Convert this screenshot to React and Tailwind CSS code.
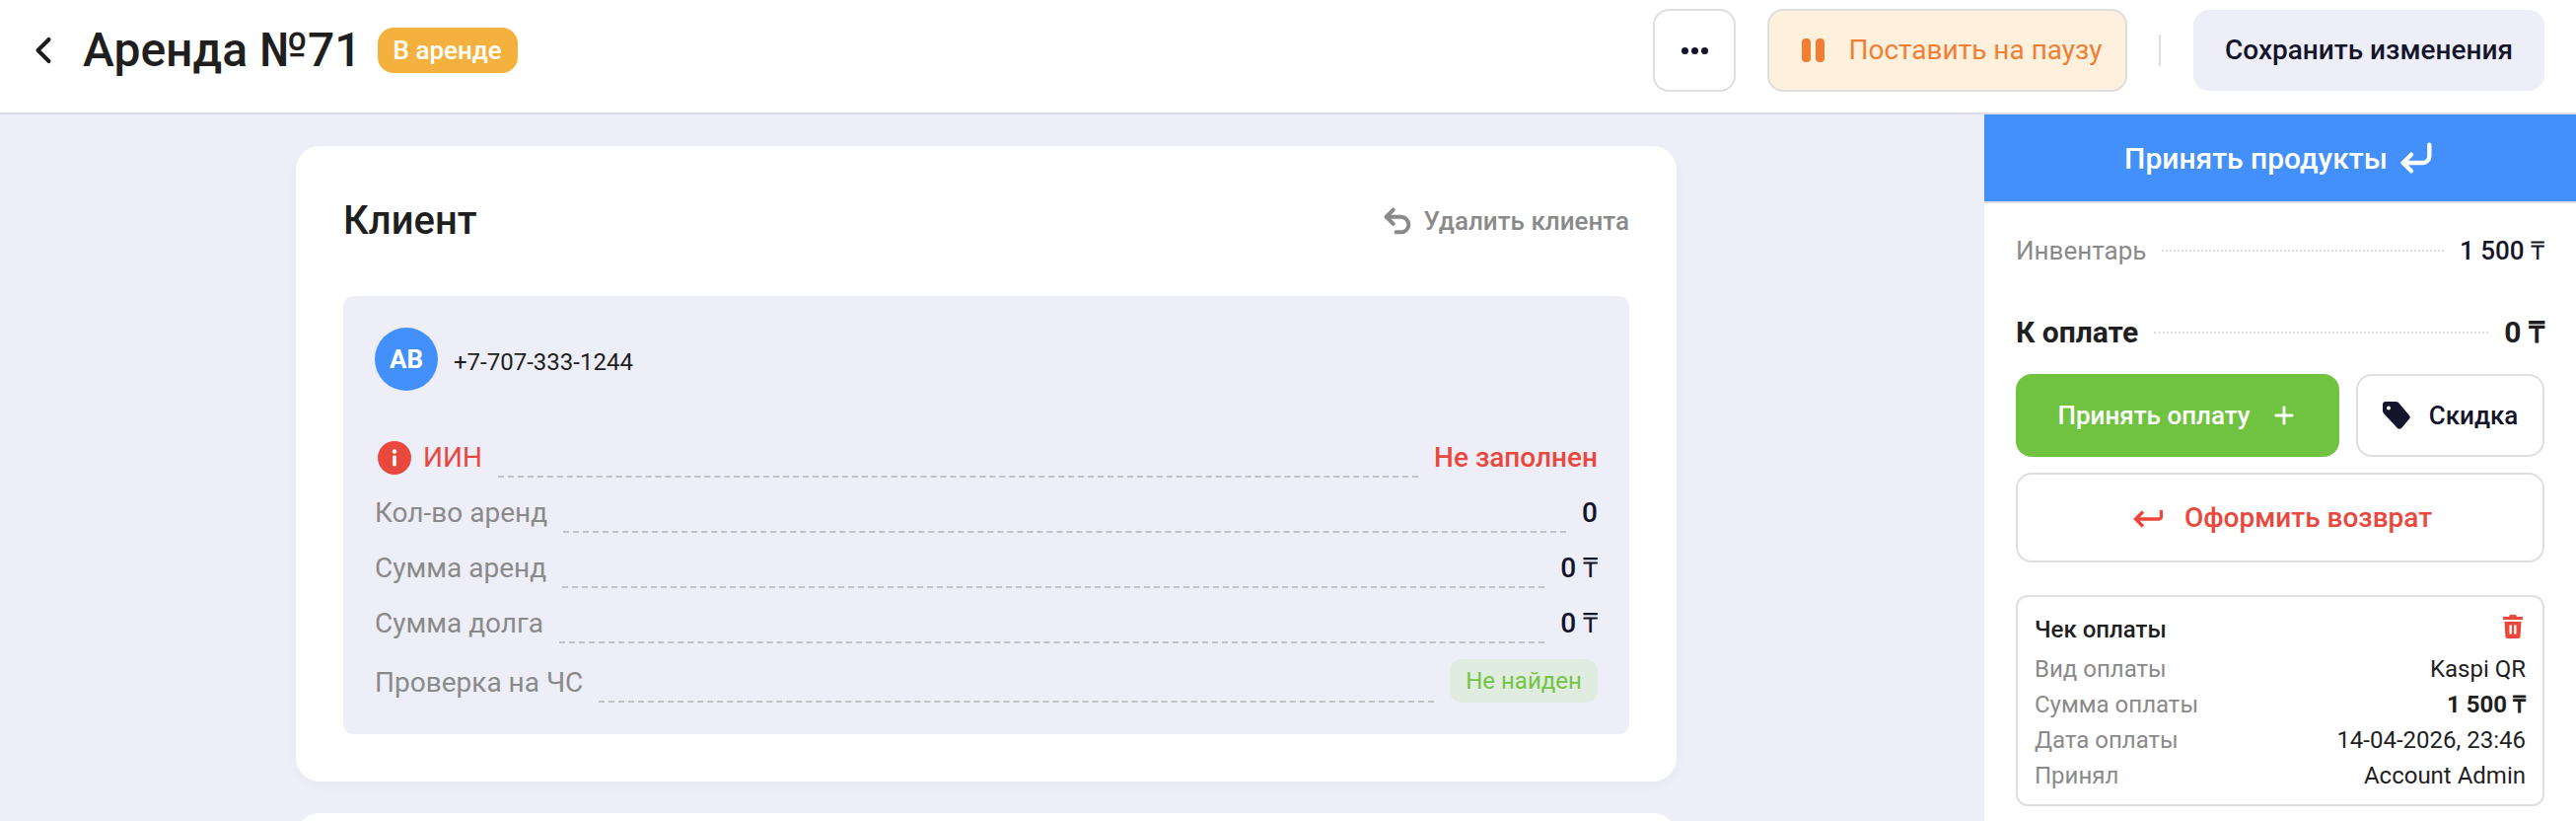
import { ChevronLeft, CornerDownLeft, Plus, Undo2 } from 'lucide-react';

const clientRows = [
    { label: 'Кол-во аренд', value: '0' },
    { label: 'Сумма аренд', value: '0 ₸' },
    { label: 'Сумма долга', value: '0 ₸' },
];

const receiptRows = [
    { label: 'Вид оплаты', value: 'Kaspi QR' },
    { label: 'Сумма оплаты', value: '1 500 ₸', bold: true },
    { label: 'Дата оплаты', value: '14-04-2026, 23:46' },
    { label: 'Принял', value: 'Account Admin' },
];

function Header() {
    return (
        <header className="h-[116px] shrink-0 flex items-center justify-between bg-white border-b-2 border-[#dcdce4] pb-[12px] pl-[22px] pr-[32px]">
            <div className="flex items-center">
                <ChevronLeft className="w-[44px] h-[44px] text-[#1c1c1c]" strokeWidth={2.2} />
                <h1 className="ml-[18px] text-[48px] leading-[56px] font-medium text-[#1f1f1f]">Аренда №71</h1>
                <span className="ml-[16px] h-[46px] px-[16px] flex items-center rounded-[16px] bg-[#f5b13d] text-white text-[26px] font-medium">
                    В аренде
                </span>
            </div>
            <div className="flex items-center">
                <button className="w-[84px] h-[84px] flex items-center justify-center gap-[3px] bg-white border-2 border-[#dedede] rounded-[16px]">
                    <span className="w-[7px] h-[7px] rounded-full bg-[#14142b]" />
                    <span className="w-[7px] h-[7px] rounded-full bg-[#14142b]" />
                    <span className="w-[7px] h-[7px] rounded-full bg-[#14142b]" />
                </button>
                <button className="ml-[32px] w-[365px] h-[84px] pl-[10px] flex items-center justify-center bg-[#fdf0dc] border-2 border-[#dedede] rounded-[16px] text-[#f07f35] text-[28px]">
                    <span className="flex gap-[5px] mr-[24px]">
                        <span className="w-[9px] h-[24px] rounded-[4px] bg-[#f07f35]" />
                        <span className="w-[9px] h-[24px] rounded-[4px] bg-[#f07f35]" />
                    </span>
                    Поставить на паузу
                </button>
                <div className="ml-[32px] w-[2px] h-[32px] bg-[#dedede]" />
                <button className="ml-[33px] w-[356px] h-[82px] flex items-center justify-center bg-[#edeef8] rounded-[16px] text-[#14142b] text-[28px] font-medium">
                    Сохранить изменения
                </button>
            </div>
        </header>
    );
}

function ClientRow({ label, value, children, labelClass = 'text-[#8a8a8a]', valueClass = 'text-[#14142b] font-medium' }) {
    return (
        <div className="flex items-end h-[38px] text-[28px] leading-[36px]">
            {children}
            <span className={`${labelClass} mb-[2px]`}>{label}</span>
            <span className="flex-1 mx-[16px] border-b-2 border-dashed border-[#c2c2c4]" />
            <span className={`${valueClass} mb-[2px]`}>{value}</span>
        </div>
    );
}

function ClientCard() {
    return (
        <section className="bg-white rounded-[24px] shadow-[0_4px_12px_rgba(20,20,43,0.03)] pt-[48px] px-[48px] pb-[48px]">
            <div className="flex items-center justify-between h-[56px] mb-[48px]">
                <h2 className="text-[40px] leading-[56px] font-medium text-[#1f1f1f]">Клиент</h2>
                <button className="flex items-center text-[26px] font-medium text-[#8a8a8a]">
                    <Undo2 className="w-[34px] h-[34px] mr-[10px]" strokeWidth={2.8} />
                    Удалить клиента
                </button>
            </div>
            <div className="bg-[#edeef7] rounded-[10px] pt-[32px] px-[32px] pb-[32px]">
                <div className="flex items-center">
                    <div className="w-[64px] h-[64px] rounded-full bg-[#4490fb] flex items-center justify-center text-white text-[26px] font-bold">
                        АВ
                    </div>
                    <span className="ml-[16px] mt-[6px] text-[24px] text-[#1f1f1f]">+7-707-333-1244</span>
                </div>
                <div className="mt-[50px] flex flex-col gap-[18px]">
                    <ClientRow label="ИИН" value="Не заполнен" labelClass="text-[#e9483d]" valueClass="text-[#e9483d] font-medium">
                        <svg viewBox="0 0 34 34" className="w-[34px] h-[34px] ml-[3px] mr-[12px] mb-[3px]">
                            <circle cx="17" cy="17" r="17" fill="#e9483d" />
                            <circle cx="17" cy="10.5" r="2.2" fill="#fff" />
                            <rect x="15.2" y="14.5" width="3.6" height="11" rx="1.4" fill="#fff" />
                        </svg>
                    </ClientRow>
                    {clientRows.map((row) => (
                        <ClientRow key={row.label} label={row.label} value={row.value} />
                    ))}
                    <div className="flex items-end h-[44px] -mt-[2px] text-[28px]">
                        <span className="text-[#8a8a8a] leading-[38px] mb-[1px]">Проверка на ЧС</span>
                        <span className="flex-1 mx-[16px] border-b-2 border-dashed border-[#c2c2c4]" />
                        <span className="h-[44px] w-[150px] flex items-center justify-center rounded-[12px] bg-[#e1ece0] text-[#72c444] text-[24px]">
                            Не найден
                        </span>
                    </div>
                </div>
            </div>
        </section>
    );
}

function Sidebar() {
    return (
        <aside className="w-[600px] shrink-0 bg-white">
            <button className="w-full h-[90px] flex items-center justify-center bg-[#4490fb] border-b-2 border-[#dcdce4] text-white text-[30px] font-medium">
                Принять продукты
                <CornerDownLeft className="w-[40px] h-[40px] ml-[9px]" strokeWidth={2.6} />
            </button>
            <div className="px-[32px]">
                <div className="flex items-center h-[36px] mt-[30px] text-[26px] leading-[36px]">
                    <span className="text-[#8a8a8a]">Инвентарь</span>
                    <span className="flex-1 mx-[16px] border-b-2 border-dotted border-[#dcdcdc]" />
                    <span className="font-medium text-[#14142b]">1 500 ₸</span>
                </div>
                <div className="flex items-center h-[40px] mt-[45px] text-[30px] leading-[40px] font-bold text-[#1f1f1f]">
                    <span>К оплате</span>
                    <span className="flex-1 mx-[16px] border-b-2 border-dotted border-[#dcdcdc]" />
                    <span>0 ₸</span>
                </div>
                <div className="flex gap-[17px] mt-[22px]">
                    <button className="w-[328px] h-[84px] flex items-center justify-center bg-[#70c340] rounded-[16px] text-white text-[26px] font-medium">
                        Принять оплату
                        <Plus className="w-[28px] h-[28px] ml-[20px]" strokeWidth={2.4} />
                    </button>
                    <button className="flex-1 h-[84px] flex items-center justify-center bg-white border-2 border-[#dedede] rounded-[16px] text-[#14142b] text-[26px] font-medium">
                        <svg viewBox="0 0 28 28" className="w-[28px] h-[28px] mr-[19px]">
                            <path d="M3 0H13Q15 0 16 1L27 14Q28.500 16 27 17.500L19 27Q17 28.500 15 27L1 12Q0 11 0 9V3Q0 0 3 0ZM6 8.500a2 2 0 1 0 0-4 2 2 0 0 0 0 4Z" fill="#14142b" fillRule="evenodd" />
                        </svg>
                        Скидка
                    </button>
                </div>
                <button className="w-full h-[91px] mt-[16px] pl-[5px] flex items-center justify-center bg-white border-2 border-[#dedede] rounded-[16px] text-[#e9483d] text-[28px] font-medium">
                    <svg viewBox="0 0 30 24" fill="none" stroke="#e9483d" strokeWidth="3.4" className="w-[30px] h-[24px] mr-[22px]">
                        <path d="M28.500 4v6.500a2.500 2.500 0 0 1-2.500 2.500H3M10 5.500 2.500 13l7.500 7.500" />
                    </svg>
                    Оформить возврат
                </button>
                <div className="mt-[33px] h-[214px] border-2 border-[#dedede] rounded-[12px] pt-[15px] px-[17px] text-[24px] leading-[36px]">
                    <div className="flex items-center justify-between h-[36px] mb-[4px] font-medium text-[#1f1f1f]">
                        Чек оплаты
                        <svg viewBox="0 0 20 24" className="w-[20px] h-[24px] -mt-[6px] mr-[3px]">
                            <path d="M7 0h6l1 2h5a1 1 0 0 1 1 1v2H0V3a1 1 0 0 1 1-1h5zM1.500 7h17l-.9 15a2 2 0 0 1-2 2H4.400a2 2 0 0 1-2-2zM6.500 10.500v9h2.400v-9zM11.100 10.500v9h2.400v-9z" fill="#e9483d" fillRule="evenodd" />
                        </svg>
                    </div>
                    {receiptRows.map((row) => (
                        <div key={row.label} className="flex items-center justify-between h-[36px]">
                            <span className="text-[#8a8a8a]">{row.label}</span>
                            <span className={row.bold ? 'font-bold text-[#1f1f1f]' : 'text-[#1f1f1f]'}>{row.value}</span>
                        </div>
                    ))}
                </div>
            </div>
        </aside>
    );
}

export default function App() {
    return (
        <div className="h-screen flex flex-col overflow-hidden bg-[#edeef7] font-['Roboto',sans-serif]">
            <Header />
            <main className="flex-1 flex min-h-0">
                <div className="flex-1 overflow-hidden pl-[300px] pr-[312px] pt-[32px]">
                    <ClientCard />
                    <section className="mt-[32px] h-[200px] bg-white rounded-[24px]" />
                </div>
                <Sidebar />
            </main>
        </div>
    );
}
